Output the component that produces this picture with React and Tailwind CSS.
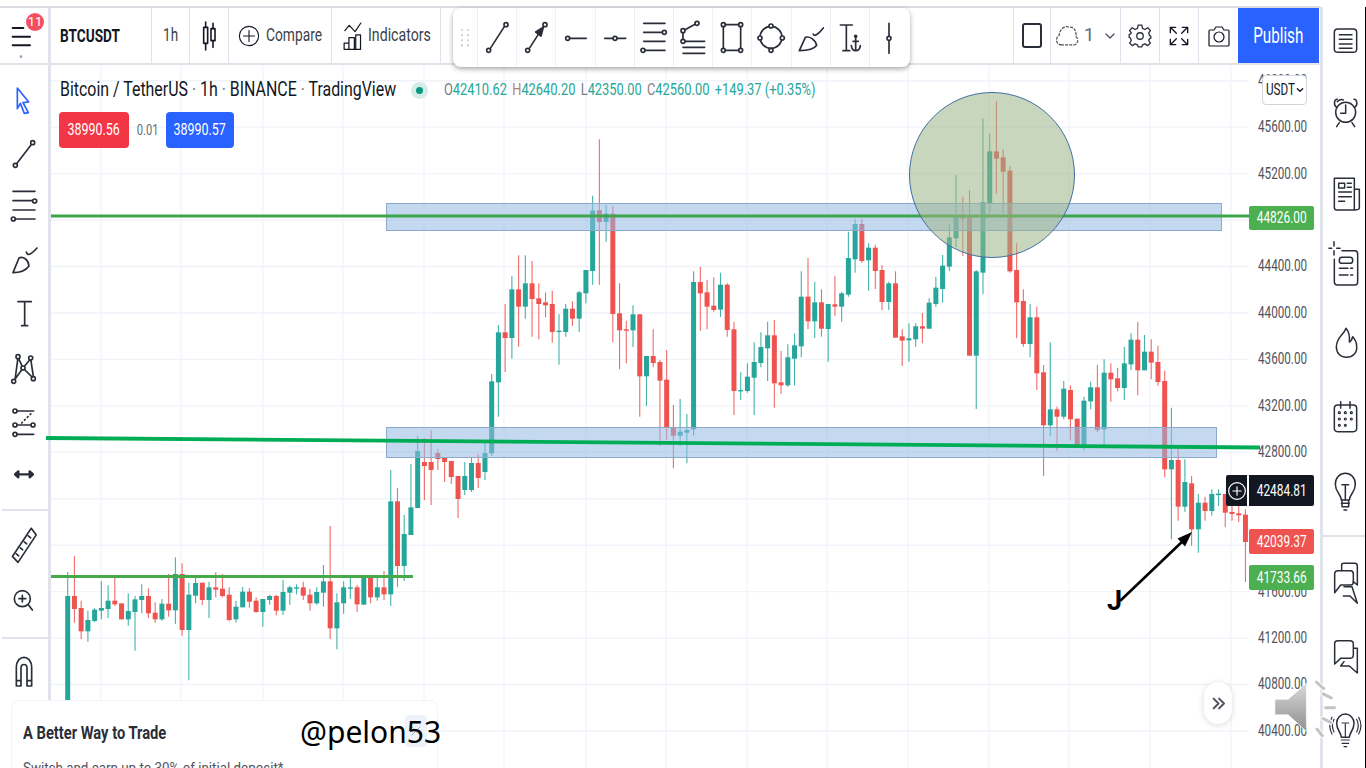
import React from "react";

const group = (base, start, rows) =>
  rows.map((r, k) => ({ i: start + k, c: r[0], wt: base + r[1] / 3, bt: base + r[2] / 3, bb: base + r[3] / 3, wb: base + r[4] / 3 }));

const candles = [
  ...group(460, 0, [
    ["g",336,408,735,735],["r",288,408,447,488],["r",422,444,514,537],["g",452,480,514,545],["g",445,449,483,487],
    ["g",364,444,452,478],["g",376,422,447,474],["r",345,422,433,438],["r",430,430,478,478],["g",400,453,478,497],
    ["g",408,418,456,572],["g",373,408,420,460],["r",385,408,460,474],["r",427,458,478,488],["g",417,431,478,482],
    ["r",342,431,451,470],["g",292,342,451,492],["r",310,342,510,527],["g",368,404,510,661],["g",348,369,407,430],
    ["r",368,368,420,435],["g",365,382,420,474],["r",337,382,389,412],["r",342,386,408,412],["r",382,404,480,484],
    ["g",422,440,478,488],["g",381,395,442,442],["r",385,395,425,443],["r",412,422,456,458],["g",417,417,456,500],
    ["g",404,408,420,434],["r",404,408,452,466],["g",360,396,452,465],["g",377,382,398,434],["g",373,382,385,403],
    ["r",365,382,407,420],["r",386,404,430,452],["g",382,396,430,434],["g",315,364,398,440],["r",198,364,505,537],
    ["g",400,427,505,568],["g",364,382,430,461],["g",348,382,386,417],["r",375,382,433,456],["g",350,350,434,434],
    ["r",347,354,412,430],["g",352,382,412,422],["r",333,382,403,420],["g",30,124,403,438],["r",84,124,318,381],
    ["g",164,222,318,363],["g",12,142,225,225],
  ]),
  ...group(0, 52, [
    ["g",1308,1353,1524,1524],["r",1314,1386,1398,1500],["r",1290,1386,1410,1515],["r",1347,1359,1377,1410],["r",1371,1374,1386,1446],
    ["r",1383,1383,1431,1452],["r",1428,1428,1497,1554],["g",1386,1428,1470,1485],["g",1374,1389,1470,1476],["r",1362,1389,1434,1464],
    ["g",1329,1359,1416,1440],
  ]),
  ...group(130, 63, [
    ["g",732,754,970,978],["g",585,607,757,860],["r",522,607,624,726],["g",438,478,624,686],["r",376,478,530,650],
    ["g",376,460,530,566],["r",393,460,507,620],["r",460,505,522,628],["r",487,517,526,562],["r",482,522,606,638],
    ["g",553,602,606,704],["g",522,536,606,620],["r",514,536,566,588],["g",482,487,566,606],["g",420,420,490,520],
    ["g",197,242,423,464],["r",28,241,276,464],["g",225,251,276,335],["r",228,251,552,637],["r",460,550,601,718],
    ["r",572,598,602,700],["g",526,553,601,651],["r",553,553,739,860],["g",678,678,739,828],["r",598,678,699,712],
    ["r",690,696,752,948],["r",660,749,893,930],["r",825,892,917,1015],["g",807,905,917,948],["g",852,900,908,1000],
    ["g",424,456,898,917],["r",410,456,490,602],["r",450,487,530,598],["r",442,527,540,545],["g",428,464,539,561],
    ["r",460,464,600,620],
  ]),
  ...group(80, 99, [
    ["r",725,748,933,1005],["g",877,930,934,960],["g",850,890,933,938],["g",787,846,893,1005],["g",757,801,849,862],
    ["g",725,766,805,903],["r",720,766,910,983],["r",813,907,916,942],["g",793,832,916,920],["g",760,796,836,916],
    ["g",574,650,799,832],["r",534,650,724,747],["g",605,667,724,774],["r",628,667,746,770],["g",672,672,747,845],
    ["r",587,673,680,708],["g",636,640,680,725],["g",455,534,644,650],["g",418,432,538,578],["r",418,432,543,548],
    ["g",490,503,541,632],["r",494,503,573,627],["r",556,570,666,690],["g",605,610,666,690],["r",574,610,773,773],
    ["r",748,769,782,858],["g",730,775,781,845],["g",730,739,778,800],["r",699,739,746,790],["g",655,668,746,746],
    ["g",590,623,672,680],["g",525,557,627,668],["g",432,472,560,574],["g",285,407,475,502],["r",350,407,416,528],
    ["r",330,412,827,827],["g",570,574,827,987],["g",115,366,578,643],["g",160,214,369,400],["r",63,214,236,342],
    ["r",208,232,275,400],["r",258,272,574,578],["r",490,570,667,775],["r",628,663,792,800],["g",672,712,792,832],
    ["r",680,712,880,930],["r",855,877,1036,1188],["g",787,988,1036,1068],["r",980,988,1010,1112],["g",903,926,1010,1018],
    ["r",916,930,1018,1080],["r",1016,1016,1095,1095],["g",950,962,1095,1112],["g",905,922,964,988],
  ]),
  ...group(90, 153, [
    ["r",825,892,1020,1026],["g",808,848,1018,1065],["r",820,848,868,935],["r",833,865,894,904],["g",770,820,894,930],
    ["g",730,749,823,840],["r",695,749,841,916],["g",735,785,841,841],["r",748,785,818,868],["r",767,816,876,887],
    ["r",842,873,1138,1162],["g",953,1110,1138,1348],["r",1065,1110,1250,1292],["g",1108,1176,1250,1265],["r",1158,1180,1318,1367],
    ["g",1212,1238,1318,1388],["r",1220,1238,1263,1292],["g",1198,1212,1263,1277],["g",1198,1211,1214,1248],["r",1212,1212,1268,1312],
    ["r",1248,1266,1272,1292],["r",1248,1270,1276,1296],["r",1258,1274,1356,1476],
  ]),
];

const gridX = [101,181,263,343,424,504,586,666,747,827,908,989,1069,1150,1231];
const prices = ["46000.00","45600.00","45200.00","44800.00","44400.00","44000.00","43600.00","43200.00","42800.00","42400.00","42000.00","41600.00","41200.00","40800.00","40400.00"];

const Chart = () => (
  <svg viewBox="51 65 1269 703" className="absolute left-0 top-0 w-[1269px] h-[703px] overflow-visible">
    {Array.from({ length: 15 }, (_, k) => (
      <line key={k} x1="51" x2="1249" y1={80.7 + k * 46.45} y2={80.7 + k * 46.45} stroke="#f0f3fa" strokeWidth="1.4" />
    ))}
    {gridX.map((x) => (
      <line key={x} x1={x} x2={x} y1="65" y2="768" stroke="#f0f3fa" strokeWidth="1.2" />
    ))}
    {candles.map((d) => {
      const x = 67.7 + 6.73 * d.i;
      const col = d.c === "g" ? "#26a69a" : "#ef5350";
      return (
        <g key={d.i}>
          <line x1={x} x2={x} y1={d.wt} y2={d.wb} stroke={col} strokeWidth="1.1" opacity="0.85" />
          <rect x={x - 2.5} y={d.bt} width="5" height={Math.max(d.bb - d.bt, 1.4)} fill={col} />
        </g>
      );
    })}
    <rect x="386.5" y="203.5" width="835" height="27" fill="#94b9e3" fillOpacity="0.55" stroke="#8aa9cb" strokeWidth="1" />
    <rect x="386.5" y="427.5" width="830" height="30" fill="#94b9e3" fillOpacity="0.55" stroke="#8aa9cb" strokeWidth="1" />
    <line x1="51" x2="1249" y1="216" y2="216" stroke="#3da64b" strokeWidth="3" />
    <circle cx="992" cy="175" r="82.5" fill="#9cb588" fillOpacity="0.55" stroke="#41709f" strokeWidth="1" />
    <line x1="46" y1="438" x2="1260" y2="447.5" stroke="#00ad55" strokeWidth="3.8" />
    <line x1="51" x2="413" y1="576.5" y2="576.5" stroke="#45aa47" strokeWidth="3" />
    <line x1="1120" y1="601" x2="1185" y2="539" stroke="#000" strokeWidth="2.6" />
    <polygon points="1192,532 1177.5,538.5 1185,546.5" fill="#000" />
  </svg>
);

const Ic = ({ vb, w, h, sw = 5, stroke = "#2a2e39", className = "", children }) => (
  <svg viewBox={vb} width={w} height={h} fill="none" stroke={stroke} strokeWidth={sw} strokeLinecap="round" strokeLinejoin="round" className={`shrink-0 ${className}`}>
    {children}
  </svg>
);

const Sq = ({ s, children }) => <span className={`inline-block whitespace-nowrap ${s}`}>{children}</span>;

const Cell = ({ w, border = true, children, className = "" }) => (
  <div className={`h-full flex items-center justify-center shrink-0 ${w} ${border ? "border-r border-[#e0e3eb]" : ""} ${className}`}>{children}</div>
);

/* floating toolbar icons, drawn in zoom coordinates (origin 450,0, 3x) */
const floatIcons = [
  [143, <><path d="M123 143 L165 78" /><circle cx="118" cy="149" r="6" /><circle cx="170" cy="72" r="6" /></>],
  [260, <><path d="M240 143 L282 78" /><circle cx="235" cy="149" r="6" /><circle cx="287" cy="72" r="6" /><polygon points="282,80 259,94 275,106" fill="#2a2e39" /></>],
  [378, <><circle cx="356" cy="113" r="6" /><path d="M362 113 H412" /></>],
  [498, <><path d="M467 113 H492 M504 113 H530" /><circle cx="498" cy="113" r="6" /></>],
  [615, <><path d="M584 68 H648 M584 95 H640 M584 122 H648 M588 149 H648" /><circle cx="646" cy="95" r="6" /><circle cx="582" cy="149" r="6" /></>],
  [733, <><circle cx="745" cy="68" r="6" /><circle cx="703" cy="90" r="6" /><circle cx="703" cy="122" r="6" /><path d="M739 71 L709 87 M703 96 V116 M709 122 H768 M703 140 H768 M703 158 H768" /></>],
  [850, <><circle cx="824" cy="72" r="6" /><circle cx="876" cy="72" r="6" /><circle cx="824" cy="149" r="6" /><circle cx="876" cy="149" r="6" /><path d="M830 72 H870 M824 78 V143 M876 78 V143 M830 149 H870" /></>],
  [968, <><circle cx="968" cy="110" r="33" /><g fill="#fff"><circle cx="968" cy="76" r="6" /><circle cx="935" cy="112" r="6" /><circle cx="1002" cy="112" r="6" /><circle cx="968" cy="149" r="6" /></g></>],
  [1087, <><path d="M1052 150 L1070 110 C1082 106 1100 116 1104 134 C1096 146 1080 150 1052 150 Z" /><path d="M1094 100 C1096 108 1106 104 1124 82" /></>],
  [1205, <><path d="M1176 73 H1212 M1194 73 V150 M1184 150 H1204" /><circle cx="1222" cy="107" r="3" fill="#2a2e39" /><path d="M1222 110 V150 M1209 135 C1210 146 1216 150 1222 150 C1228 150 1235 146 1236 135 M1214 122 H1230" /></>],
  [1322, <><path d="M1322 68 V105 M1322 120 V158" /><circle cx="1322" cy="113" r="6" /></>],
];

/* left toolbar icons */
const leftIcons = [
  { h: "h-[53px]", hh: 53, vb: "0 0 126 159", dy: -2, el: <path d="M43 26 L77 68 L60 70 L76 100 L64 102 L52 72 L43 88 Z" transform="translate(0,22)" stroke="#2962ff" /> },
  { h: "h-[53px]", hh: 53, vb: "0 0 126 159", dy: -2, el: <><path d="M42 115 L84 60" /><circle cx="37" cy="121" r="6" /><circle cx="89" cy="53" r="6" /></> },
  { h: "h-[53px]", hh: 53, vb: "0 0 126 159", dy: -1, el: <><path d="M30 37 H96 M30 65 H88 M30 93 H96 M36 120 H96" /><circle cx="95" cy="66" r="6" /><circle cx="31" cy="120" r="6" /></> },
  { h: "h-[55px]", hh: 55, vb: "0 0 126 165", dy: 3, el: <><path d="M30 110 L48 66 C60 60 76 70 78 90 C68 104 52 110 30 110 Z" /><path d="M70 48 C74 62 86 54 102 36" /></> },
  { h: "h-[51px]", hh: 51, vb: "0 0 126 153", dy: 1, el: <path d="M45 38 H85 M65 38 V110 M56 110 H74" /> },
  { h: "h-[55px]", hh: 55, vb: "0 0 126 165", dy: 1, el: <><g fill="#fff"><path d="M45 52 L60 84 L30 126 M83 56 L60 84 L92 116 M45 52 L36 120 M83 56 L92 116" /><circle cx="45" cy="50" r="6" /><circle cx="83" cy="54" r="6" /><circle cx="60" cy="84" r="6" /><circle cx="91" cy="116" r="6" /><circle cx="32" cy="124" r="6" /></g></> },
  { h: "h-[52px]", hh: 52, vb: "0 0 126 156", dy: 3, el: <><circle cx="36" cy="42" r="6" /><circle cx="36" cy="84" r="6" /><circle cx="90" cy="84" r="6" /><circle cx="36" cy="112" r="6" /><path d="M42 42 H92 M42 84 H84 M42 112 H92" /><path d="M56 78 L84 50" strokeDasharray="3 9" /></> },
  { h: "h-[57px]", hh: 57, vb: "0 0 126 171", dy: 0, el: <path d="M40 85 H86 M46 76 L36 85 L46 94 Z M80 76 L90 85 L80 94 Z" fill="#131722" strokeWidth="7" /> },
];

const RightIcons = () => (
  <svg viewBox="0 0 138 2304" width="46" height="768" fill="none" stroke="#2a2e39" strokeWidth="4.5" strokeLinecap="round" strokeLinejoin="round" className="block">
    {/* doc */}
    <rect x="43" y="87" width="67" height="70" rx="10" />
    <path d="M58 104 H96 M58 118 H96 M58 132 H96 M58 145 H96" />
    {/* alarm */}
    <circle cx="77" cy="337" r="30" />
    <path d="M77 315 V340 H62 M52 298 C42 298 40 315 50 322 M102 298 C112 298 114 315 104 322 M58 368 L50 380 M96 368 L104 380" />
    <path d="M52 305 C60 298 66 298 70 300" />
    {/* news */}
    <path d="M43 535 H103 V630 H50 Q43 630 43 622 Z M103 568 H118 V625 Q116 630 103 630" />
    <rect x="56" y="550" width="18" height="14" />
    <path d="M82 550 H94 M82 562 H94 M56 576 H94 M56 590 H94 M56 604 H74" />
    {/* ideas */}
    <path d="M42 725 V738 M42 752 V765 M27 745 H35 M50 745 H60 M66 752 H105 Q113 752 113 762 V845 Q113 855 105 855 H52 Q43 855 43 845 V778" />
    <rect x="58" y="772" width="40" height="18" rx="8" />
    <path d="M58 805 H84 M92 805 H98 M58 825 H84 M92 825 H98" />
    {/* fire */}
    <path d="M78 985 C72 1005 50 1010 49 1040 C49 1060 62 1072 80 1072 C98 1072 112 1058 110 1040 C110 1026 104 1016 98 1010 C96 1020 92 1024 88 1026 C90 1010 86 995 78 985 Z" />
    {/* calendar */}
    <rect x="43" y="1215" width="67" height="80" rx="10" />
    <path d="M62 1205 V1225 M90 1205 V1225" />
    <g strokeWidth="3.5"><circle cx="58" cy="1238" r="3" /><circle cx="76" cy="1238" r="3" /><circle cx="94" cy="1238" r="3" /><circle cx="58" cy="1257" r="3" /><circle cx="76" cy="1257" r="3" /><circle cx="94" cy="1257" r="3" /><circle cx="58" cy="1276" r="3" /><circle cx="76" cy="1276" r="3" /></g>
    {/* bulb */}
    <g transform="translate(0,-12)">
      <path d="M64 1512 C64 1495 46 1490 46 1465 C46 1445 60 1432 76 1432 C92 1432 106 1445 106 1465 C106 1490 88 1495 88 1512 Z" />
      <path d="M64 1522 H88 M66 1532 H86 M66 1512 V1530 M86 1512 V1530 M72 1542 H80 M76 1512 V1470 M66 1466 H86" />
    </g>
    {/* chat 1 */}
    <path d="M65 1710 V1695 Q65 1690 72 1690 H104 Q112 1690 112 1698 V1730 M100 1745 L112 1755 L112 1730" />
    <path d="M44 1778 V1722 Q44 1712 54 1712 H92 Q100 1712 100 1722 V1745 Q100 1755 92 1755 H62 Z M72 1760 L96 1760 L112 1810 L90 1788 H70" />
    {/* chat 2 */}
    <path d="M44 1992 V1930 Q44 1922 54 1922 H90 Q100 1922 100 1932 V1965 Q100 1975 90 1975 H62 Z M100 1945 H112 V2019 L88 1998 H62 L72 1985" />
    {/* bulb 3 */}
    <g transform="translate(0,22)">
      <path d="M64 2190 C64 2175 50 2170 50 2148 C50 2132 62 2120 76 2120 C90 2120 102 2132 102 2148 C102 2170 88 2175 88 2190 Z" />
      <path d="M64 2198 H88 M66 2208 H86 M72 2218 H80 M76 2190 V2150 M66 2147 H86 M36 2130 C28 2145 28 2165 36 2180 M42 2136 C36 2148 36 2162 42 2174 M116 2130 C124 2145 124 2165 116 2180 M110 2136 C116 2148 116 2162 110 2174" strokeWidth="3.5" />
    </g>
  </svg>
);

const Speaker = () => (
  <svg viewBox="520 780 270 190" width="90" height="63" className="absolute left-[1273px] top-[680px]">
    <defs>
      <linearGradient id="spk" x1="0" y1="0" x2="0" y2="1">
        <stop offset="0" stopColor="#d8d8d8" />
        <stop offset="1" stopColor="#8f8f8f" />
      </linearGradient>
    </defs>
    <polygon points="620,790 565,838 525,838 525,885 565,885 620,935" fill="url(#spk)" stroke="#ffffff" strokeWidth="2" />
    <g stroke="#fff" strokeWidth="15" strokeLinecap="round">
      <path d="M650 786 L672 806 M670 822 L695 834 M678 864 L705 864 M670 896 L693 908 M652 928 L668 948" />
    </g>
    <g stroke="#c4c4c4" strokeWidth="9" strokeLinecap="round">
      <path d="M650 786 L672 806 M670 822 L695 834 M678 864 L705 864 M670 896 L693 908 M652 928 L668 948" />
    </g>
  </svg>
);

export default function App() {
  return (
    <div className="relative w-[1366px] h-[768px] overflow-hidden bg-white flex text-[#131722] [font-family:Roboto,'Liberation_Sans',sans-serif]">
      {/* main column */}
      <div className="w-[1320px] h-full flex flex-col shrink-0 pt-[6px]">
        <div className="h-[59px] flex border-t-2 border-b-2 border-t-[#dcdde2] border-b-[#e0e3eb] shrink-0">
          <div className="relative w-[48px] h-full shrink-0">
            <Ic vb="0 0 144 168" w={48} h={56} sw={6} stroke="#131722" className="absolute left-0 top-0">
              <path d="M38 60 H70 M38 86 H90 M38 112 H90" />
              <circle cx="63" cy="146" r="4" fill="#9aa0ad" stroke="none" />
            </Ic>
            <span className="absolute left-[26px] top-[5px] w-[18px] h-[18px] rounded-full bg-[#f5505f] text-white text-[13px] leading-[18px] text-center">11</span>
          </div>
          <div className="w-[3px] h-full bg-[#e0e3eb] shrink-0" />
          <Cell w="w-[101px]" className="justify-start pl-[9px] font-bold text-[18px]"><Sq s="origin-left [transform:scaleX(0.757)]">BTCUSDT</Sq></Cell>
          <Cell w="w-[38px]" className="text-[19px] text-[#3b3f4a]"><Sq s="[transform:scaleX(0.71)]">1h</Sq></Cell>
          <Cell w="w-[39px]">
            <Ic vb="0 0 42 54" w={28} h={36} sw={2.4} stroke="#131722">
              <rect x="13" y="14" width="6" height="24" /><path d="M16 6 V14 M16 38 V48" />
              <rect x="24" y="16" width="6" height="18" /><path d="M27 8 V16 M27 34 V44" />
            </Ic>
          </Cell>
          <Cell w="w-[103px]" className="justify-start pl-[9px] gap-[6px] text-[19px] text-[#3b3f4a]">
            <Ic vb="0 0 24 24" w={22} h={22} sw={1.2} stroke="#131722"><circle cx="12" cy="12" r="10.5" /><path d="M12 6 V18 M6 12 H18" /></Ic>
            <Sq s="origin-left [transform:scaleX(0.726)]">Compare</Sq>
          </Cell>
          <Cell w="w-[109px]" className="justify-start pl-[11px] gap-[6px] text-[19px] text-[#3b3f4a]">
            <Ic vb="0 0 55 82" w={19} h={28} sw={3.6} stroke="#131722">
              <path d="M5 25 L18 10 L35 28 L52 3" />
              <path d="M3 80 V62 H17 V80 M17 80 V46 H33 V80 M37 80 V38 H51 V80 H3" />
            </Ic>
            <Sq s="origin-left [transform:scaleX(0.745)]">Indicators</Sq>
          </Cell>
          <div className="flex-1" />
          <Cell w="w-[38px]" className="border-l">
            <div className="w-[20px] h-[25px] border-2 border-[#2a2e39] rounded-[3px]" />
          </Cell>
          <Cell w="w-[70px]" className="gap-[2px] text-[19px] text-[#6a6d78]">
            <Ic vb="0 0 24 22" w={25} h={23} sw={1.2} stroke="#50535e"><path d="M6 20 C1 20 0 13 4 11 C4 5 10 1 13 3 C18 2 21 7 20 12 C23 14 22 20 18 20 Z" strokeDasharray="2 2" /></Ic>
            <span className="ml-[2px]">1</span>
            <Ic vb="0 0 12 12" w={12} h={12} sw={1.4} stroke="#50535e" className="ml-[8px]"><path d="M2 4 L6 8 L10 4" /></Ic>
          </Cell>
          <Cell w="w-[39px]">
            <Ic vb="0 0 24 24" w={26} h={26} sw={1.2} stroke="#2a2e39"><circle cx="12" cy="12" r="3" /><path d="M10.3 2 H13.7 L14.3 5 L16.6 6 L19.2 4.4 L21.6 6.8 L20 9.4 L21 11.7 L22 12.3 V14 L20.8 14.7 L20 15.9 L21.6 18.5 L19.2 20.9 L16.6 19.3 L14.3 20.2 L13.7 22 H10.3 L9.7 20.2 L7.4 19.3 L4.8 20.9 L2.4 18.5 L4 15.9 L3 13.7 L2 13.3 V10.7 L3.2 10 L4 9.4 L2.4 6.8 L4.8 4.4 L7.4 6 L9.7 5 Z" /></Ic>
          </Cell>
          <Cell w="w-[39px]">
            <Ic vb="0 0 60 60" w={20} h={20} sw={4} stroke="#131722"><path d="M4 20 V4 H20 M4 4 L22 22 M40 4 H56 V20 M56 4 L38 22 M4 40 V56 H20 M4 56 L22 38 M56 40 V56 H40 M56 56 L38 38" /></Ic>
          </Cell>
          <Cell w="w-[39px]" border={false}>
            <Ic vb="0 0 24 24" w={24} h={24} sw={1.2} stroke="#131722"><path d="M3 6 H7 L9 3 H15 L17 6 H21 Q22 6 22 7 V21 Q22 22 21 22 H3 Q2 22 2 21 V7 Q2 6 3 6 Z" /><circle cx="12" cy="13" r="5" /></Ic>
          </Cell>
          <div className="w-[81px] h-full bg-[#2962ff] text-white text-[22px] flex items-center justify-center shrink-0"><Sq s="[transform:scaleX(0.69)]">Publish</Sq></div>
          <div className="w-[1px] shrink-0" />
        </div>

        <div className="flex-1 flex min-h-0">
          {/* left toolbar */}
          <div className="w-[48px] h-full shrink-0 flex flex-col items-stretch pt-[9px] overflow-hidden">
            {leftIcons.map((ic, k) => (
              <div key={k} className={`${ic.h} flex items-center justify-center shrink-0`}>
                <Ic vb={ic.vb} w={42} h={ic.hh}><g transform={`translate(0,${ic.dy * 3})`}>{ic.el}</g></Ic>
              </div>
            ))}
            <div className="h-[2px] bg-[#e0e3eb] mt-[6px] ml-[2px] shrink-0" />
            <div className="h-[68px] flex items-center justify-center shrink-0">
              <Ic vb="0 0 126 130" w={42} h={43}><path d="M85 13 L100 33 L45 116 L28 98 Z M40 90 L47 96 M52 72 L59 78 M64 54 L71 60 M76 36 L83 42" /></Ic>
            </div>
            <div className="h-[42px] flex items-center justify-center shrink-0">
              <Ic vb="0 0 126 120" w={42} h={40}><circle cx="58" cy="56" r="24" /><path d="M48 56 H68 M58 46 V66 M76 74 L88 90" /></Ic>
            </div>
            <div className="h-[2px] bg-[#e0e3eb] mt-[16px] ml-[2px] shrink-0" />
            <div className="h-[66px] flex items-center justify-center shrink-0">
              <Ic vb="0 0 126 120" w={42} h={40}><path d="M40 102 V46 C40 6 86 6 86 46 V102 H72 V48 C72 34 54 34 54 48 V102 Z M40 86 H54 M72 86 H86" /></Ic>
            </div>
          </div>
          <div className="w-[3px] h-full bg-[#e0e3eb] shrink-0" />

          {/* chart */}
          <div className="relative w-[1269px] h-full shrink-0">
            <Chart />

            {/* legend */}
            <div className="absolute left-[9px] top-[11px] flex items-center h-[28px]">
              <div className="w-[336px] shrink-0 text-[21px]">
                <Sq s="origin-left [transform:scaleX(0.758)]">Bitcoin / TetherUS <span className="text-[#787b86]">·</span> 1h <span className="text-[#787b86]">·</span> BINANCE <span className="text-[#787b86]">·</span> TradingView</Sq>
              </div>
              <span className="ml-[15px] w-[17px] h-[17px] rounded-full bg-[#d6ece6] flex items-center justify-center shrink-0">
                <span className="w-[7px] h-[7px] rounded-full bg-[#089981]" />
              </span>
              <div className="ml-[16px] w-[371px] shrink-0 text-[17px] text-[#26a69a]">
                <Sq s="origin-left [transform:scaleX(0.757)]">
                  <span className="flex gap-[7px]">
                    <span><span className="text-[#787b86]">O</span>42410.62</span>
                    <span><span className="text-[#b5826b]">H</span>42640.20</span>
                    <span><span className="text-[#787b86]">L</span>42350.00</span>
                    <span><span className="text-[#8b7a7e]">C</span>42560.00</span>
                    <span>+149.37 (+0.35%)</span>
                  </span>
                </Sq>
              </div>
            </div>
            <div className="absolute left-[8px] top-[47px] flex items-center">
              <div className="w-[70px] h-[36px] rounded-[4px] bg-[#f23645] text-white text-[17px] flex items-center justify-center"><Sq s="[transform:scaleX(0.733)]">38990.56</Sq></div>
              <div className="w-[37px] text-center text-[14px] text-[#6a6d78]"><Sq s="[transform:scaleX(0.8)]">0.01</Sq></div>
              <div className="w-[68px] h-[36px] rounded-[4px] bg-[#2962ff] text-white text-[17px] flex items-center justify-center"><Sq s="[transform:scaleX(0.733)]">38990.57</Sq></div>
            </div>

            {/* price axis */}
            <div className="absolute left-[1207px] top-[-7.5px] w-[60px] flex flex-col text-[16px] text-[#50535e]">
              {prices.map((p) => (
                <div key={p} className="h-[46.45px] flex items-center justify-start leading-none"><Sq s="origin-left [transform:scaleX(0.73)]">{p}</Sq></div>
              ))}
            </div>
            <div className="absolute left-[1211px] top-[10px] w-[45px] h-[30px] bg-white rounded-[4px] border border-[#d1d4dc] text-[16px] flex items-center justify-center">
              <span className="w-[30px]"><Sq s="origin-left [transform:scaleX(0.73)]">USDT</Sq></span>
              <Ic vb="0 0 12 12" w={8} h={8} sw={2} stroke="#131722"><path d="M2 4 L6 8 L10 4" /></Ic>
            </div>
            <div className="absolute left-[1198px] top-[141px] w-[65px] h-[24px] bg-[#4caf50] rounded-[2px] text-white text-[17px] flex items-center justify-center"><Sq s="[transform:scaleX(0.7)]">44826.00</Sq></div>
            <div className="absolute left-[1175px] top-[410px] flex h-[31px]">
              <div className="w-[21px] h-full bg-[#131722] rounded-l-[2px] flex items-center justify-center">
                <Ic vb="0 0 24 24" w={20} h={20} sw={1.4} stroke="#ffffff"><circle cx="12" cy="12" r="10" /><path d="M12 7 V17 M7 12 H17" /></Ic>
              </div>
              <div className="w-[65px] ml-[2px] h-full bg-[#131722] rounded-r-[2px] text-white text-[17px] flex items-center justify-center"><Sq s="[transform:scaleX(0.7)]">42484.81</Sq></div>
            </div>
            <div className="absolute left-[1198px] top-[464px] w-[65px] h-[25px] bg-[#ef5350] rounded-[2px] text-white text-[17px] flex items-center justify-center"><Sq s="[transform:scaleX(0.7)]">42039.37</Sq></div>
            <div className="absolute left-[1198px] top-[500px] w-[65px] h-[25px] bg-[#4caf50] rounded-[2px] text-white text-[17px] flex items-center justify-center"><Sq s="[transform:scaleX(0.7)]">41733.66</Sq></div>

            <div className="absolute left-[1056px] top-[523px] text-[27px] font-bold leading-none text-black">J</div>

            <div className="absolute left-[1153px] top-[617px] w-[28px] h-[42px] rounded-full bg-white shadow-[0_1px_6px_rgba(0,0,0,0.15)] flex items-center justify-center">
              <Ic vb="0 0 14 14" w={17} h={17} sw={1.7} stroke="#50535e"><path d="M3 3 L7 7 L3 11 M7.5 3 L11.5 7 L7.5 11" /></Ic>
            </div>
          </div>
        </div>
      </div>

      {/* right rail */}
      <div className="w-[3px] h-full bg-[#e0e3eb] shrink-0 mt-[7px]" />
      <div className="relative flex-1 h-full overflow-hidden border-r border-black mt-[7px]">
        <div className="absolute left-[-3px] top-[-7px]"><RightIcons /></div>
        <div className="absolute left-0 right-0 top-[528px] h-[2px] bg-[#e0e3eb]" />
      </div>

      {/* top toolbar floating */}
      <div className="absolute left-[453px] top-[8px] w-[457px] h-[59px] bg-white rounded-[8px] shadow-[0_2px_5px_rgba(0,0,0,0.35)] flex items-center">
        <div className="w-[25px] h-full flex items-center justify-center border-r border-[#eef0f5] shrink-0">
          <Ic vb="0 0 12 20" w={12} h={20} sw={2} stroke="#c4c7d0" className="[stroke-dasharray:0.1_5]"><path d="M3 2 V18 M9 2 V18" /></Ic>
        </div>
        {floatIcons.map(([cx, el], k) => (
          <div key={k} className={`w-[39.2px] h-full flex items-center justify-center shrink-0 ${k < 10 ? "border-r border-[#eef0f5]" : ""}`}>
            <Ic vb={`${cx - 60} 52 120 120`} w={40} h={40}>{el}</Ic>
          </div>
        ))}
      </div>

      {/* promo card */}
      <div className="absolute left-[11px] top-[700px] w-[427px] h-[80px] bg-white rounded-[8px] border border-[#f0f3fa] px-[11px] pt-[20px]">
        <div className="text-[19px] font-bold leading-[24px] text-[#2a2e39]"><Sq s="origin-left [transform:scaleX(0.773)]">A Better Way to Trade</Sq></div>
        <div className="text-[15px] text-[#50535e] mt-[14px] leading-[18px]"><Sq s="origin-left [transform:scaleX(0.89)]">Switch and earn up to 30% of initial deposit*</Sq></div>
      </div>
      <div className="absolute left-[405px] top-[715px] w-[22px] h-[32px] rounded-[4px] bg-[#eef3fb] flex items-center justify-center">
        <Ic vb="0 0 12 12" w={12} h={12} sw={1} stroke="#a9adb8"><path d="M2 2 L10 10 M10 2 L2 10" /></Ic>
      </div>
      <div className="absolute left-[300px] top-[711px] text-[30px] leading-[42px] text-black [font-family:'Noto_Sans',sans-serif]">@pelon53</div>

      <Speaker />
    </div>
  );
}
